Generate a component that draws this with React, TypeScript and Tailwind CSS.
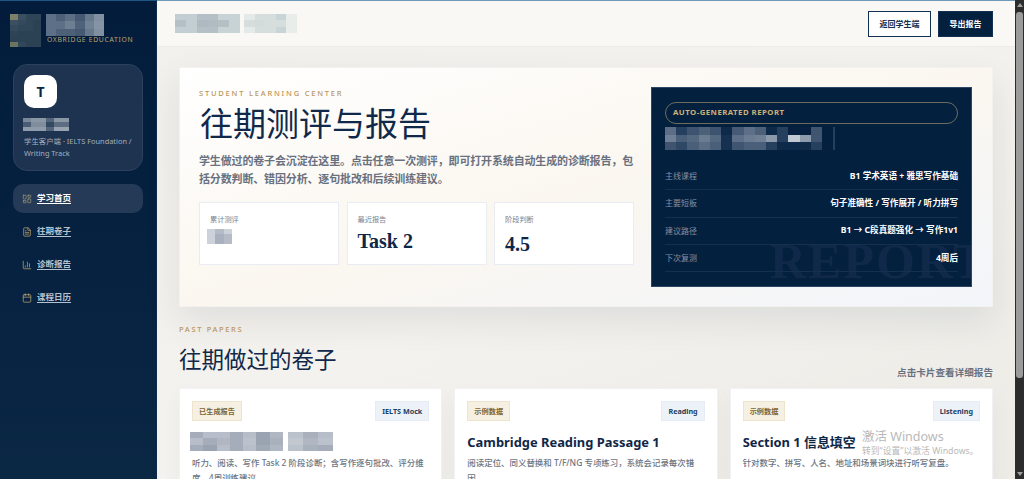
import { ChartColumn, Calendar, FileText, LayoutDashboard } from 'lucide-react'
import type { ReactNode } from 'react'

const SANS = 'font-["Noto_Sans","Noto_Sans_CJK_SC",sans-serif]'

// blurred-out regions of the reference, one hex per cell
function Mosaic({ rows, w, h }: { rows: string[][]; w: number; h: number }) {
  const cw = w / rows[0].length
  const ch = h / rows.length
  return (
    <svg width={w} height={h} shapeRendering="crispEdges" className="block shrink-0">
      {rows.map((row, y) =>
        row.map((c, x) => <rect key={`${x}-${y}`} x={x * cw} y={y * ch} width={cw + 0.5} height={ch + 0.5} fill={c} />),
      )}
    </svg>
  )
}

const LOGO = [
  ['#7d8069', '#3a5060', '#2f4658', '#2f4658'],
  ['#3c5060', '#34495a', '#2f4658', '#2b4254'],
  ['#34495a', '#2f4658', '#2f4658', '#2b4254'],
  ['#2e4456', '#2b4254', '#2b4254', '#2b4254'],
  ['#2c4254', '#2b4254', '#2b4254', '#2b4254'],
  ['#6d7361', '#31475a', '#2c4254', '#2c4254'],
]
const BRAND = [
  ['#5d7087', '#4c6078', '#5b6e83', '#455a72', '#66788c', '#8090a0'],
  ['#5d7087', '#5c6f85', '#6d7f92', '#4e637a', '#6f8194', '#8494a4'],
  ['#5d7087', '#4c6078', '#4c6078', '#455a72', '#66788c', '#8090a0'],
]
const USER = [
  ['#7a8999', '#8a97a5', '#8a97a5', '#53657c', '#8a97a5', '#8a97a5'],
  ['#4a5d75', '#7f8d9d', '#7f8d9d', '#33495f', '#5d6e82', '#5d6e82'],
  ['#8f9baa', '#8f9baa', '#8f9baa', '#53657c', '#99a4b2', '#99a4b2'],
]
const REPORT_NAME = [
  ['#5c6d85', '#24405e', '#3d5370', '#4c6078', '#3d5370', '#0e2a4a', '#465a75', '#5d6f88', '#4c6078', '#0e2a4a', '#24405e', '#08203f', '#08203f', '#3f5570'],
  ['#6f7f96', '#4a5f7a', '#54687f', '#6a7c92', '#54687f', '#16304f', '#5d6f88', '#6a7c92', '#6f8096', '#8c99aa', '#24405e', '#c0c8d2', '#8e9bac', '#3f5570'],
  ['#3e546f', '#2f4865', '#4a5f7a', '#5a6d85', '#4a5f7a', '#16304f', '#3f5570', '#4a5f7a', '#4a5f7a', '#24405e', '#0e2a4a', '#0e2a4a', '#0e2a4a', '#24405e'],
]
const HEAD_A = [
  ['#c3ced2', '#c3ced2', '#b4c0c6', '#b4c0c6', '#c8d3d6', '#c8d3d6'],
  ['#b4c0c6', '#c3ced2', '#aeb9c1', '#b0bbc2', '#b4c0c6', '#c8d3d6'],
  ['#c3ced2', '#c3ced2', '#b4c0c6', '#b4c0c6', '#c8d3d6', '#c8d3d6'],
]
const HEAD_B = [
  ['#e4eae8', '#d6dedd', '#d6dedd', '#c9d4d6', '#e8edea'],
  ['#d6dedd', '#d3dcdb', '#d6dedd', '#d6dedd', '#e8edea'],
  ['#e4eae8', '#d6dedd', '#d6dedd', '#c9d4d6', '#e8edea'],
]
const STAT = [
  ['#cdd2da', '#b5bcc8', '#cdd2da'],
  ['#cdd2da', '#a9b1bf', '#b5bcc8'],
  ['#cdd2da', '#a9b1bf', '#b5bcc8'],
]
const TITLE_A = [
  ['#a5adba', '#b8bec9', '#b8bec9', '#a5adba', '#b8bec9', '#9aa3b2', '#b0b7c3'],
  ['#b8bec9', '#a5adba', '#b0b7c3', '#a5adba', '#bcc2cc', '#9aa3b2', '#a9b1bd'],
  ['#a5adba', '#9aa3b2', '#b8bec9', '#a5adba', '#b8bec9', '#a0a9b6', '#b0b7c3'],
]
const TITLE_B = [
  ['#bcc2cc', '#a9b1bd', '#b8bec9'],
  ['#c2c7d0', '#b0b7c3', '#bcc2cc'],
  ['#bcc2cc', '#a9b1bd', '#a5adba'],
]

function NavItem({ icon, label, active }: { icon: ReactNode; label: string; active?: boolean }) {
  return (
    <a
      className={`flex h-[29px] items-center gap-[5px] rounded-[10px] pl-[9px] text-[8.5px] font-bold underline underline-offset-2 ${
        active ? 'bg-[#243a56] text-white' : 'text-[#b6c1cf]'
      }`}
    >
      <span className={active ? 'text-[#a09a7c]' : 'text-[#c4aa72]'}>{icon}</span>
      {label}
    </a>
  )
}

function Stat({ label, children }: { label: string; children: ReactNode }) {
  return (
    <div className="flex h-[63px] flex-1 flex-col border border-[#e9edf3] bg-white pl-[10px] pt-[11px]">
      <div className="text-[7.2px] leading-[10px] text-[#7a8291]">{label}</div>
      {children}
    </div>
  )
}

function ReportRow({ label, value }: { label: string; value: string }) {
  return (
    <div className="flex h-[27.3px] items-center justify-between border-b border-[#13304f]">
      <span className="text-[8px] text-[#8491a3]">{label}</span>
      <span className="text-[8.6px] font-bold text-white">{value}</span>
    </div>
  )
}

function Tag({ tone, children }: { tone: 'gold' | 'blue'; children: ReactNode }) {
  return (
    <span
      className={`flex h-[20px] items-center border px-[6px] text-[7.2px] font-bold ${
        tone === 'gold' ? 'border-[#eee3cc] bg-[#f6f0e2] text-[#7c6535]' : 'border-[#e5ecf5] bg-[#edf2f8] text-[#24405f]'
      }`}
    >
      {children}
    </span>
  )
}

function PaperCard({ tag, kind, title, desc }: { tag: string; kind: string; title: ReactNode; desc: string }) {
  return (
    <div className="h-[120px] flex-1 border border-[#f0f2f5] bg-white px-[12px] pt-[12px] shadow-[0_8px_20px_rgba(10,30,60,0.04)]">
      <div className="flex justify-between">
        <Tag tone="gold">{tag}</Tag>
        <Tag tone="blue">{kind}</Tag>
      </div>
      <div className="mt-[12px] flex h-[20px] items-center text-[12.9px] font-bold text-[#0f2747]">{title}</div>
      <p className="mt-[2px] text-[8.45px] leading-[15px] font-medium text-[#6b7482]">{desc}</p>
    </div>
  )
}

export default function App() {
  return (
    <div className={`relative flex h-[479px] w-[1024px] overflow-hidden bg-[#f3f1ec] ${SANS}`}>
      <aside className="flex w-[157px] shrink-0 flex-col border-r border-[#0d2a4a] border-t-[1px] border-t-[#1d5583] bg-gradient-to-b from-[#031c3b] to-[#0a2744] px-[13px]">
        <div className="-mx-[3px] mt-[13px] flex h-[33px] gap-[5px]">
          <Mosaic rows={LOGO} w={31} h={33} />
          <div>
            <Mosaic rows={BRAND} w={58} h={22} />
            <div className="mt-[-1px] pl-[1px] text-[6.8px] leading-[10px] tracking-[0.1em] whitespace-nowrap text-[#b3a676]">OXBRIDGE EDUCATION</div>
          </div>
        </div>
        <div className="mt-[17px] h-[107px] rounded-[14px] border border-[#2b415c] bg-[#1d3350] pl-[10px] pt-[10px]">
          <div className="flex size-[33px] items-center justify-center rounded-[10px] bg-white text-[14px] font-bold text-[#0b2545]">T</div>
          <div className="-ml-[1px] mt-[10px]">
            <Mosaic rows={USER} w={46} h={13} />
          </div>
          <div className="mt-[4px] text-[7.4px] leading-[12px] whitespace-nowrap text-[#a5b0bf]">
            学生客户端 · IELTS Foundation /
            <br />
            Writing Track
          </div>
        </div>
        <nav className="mt-[13px] flex flex-col gap-[4px]">
          <NavItem active icon={<LayoutDashboard size={10} strokeWidth={1.7} />} label="学习首页" />
          <NavItem icon={<FileText size={10} strokeWidth={1.7} />} label="往期卷子" />
          <NavItem icon={<ChartColumn size={10} strokeWidth={1.7} />} label="诊断报告" />
          <NavItem icon={<Calendar size={10} strokeWidth={1.7} />} label="课程日历" />
        </nav>
      </aside>

      <main className="flex min-w-0 flex-1 flex-col bg-gradient-to-br from-[#f2f0ec] via-[#f4f2ee] to-[#ecebe6]">
        <header className="flex h-[47px] shrink-0 items-center justify-between border-b border-[#efede7] border-t-[1px] border-t-[#6c9abb] bg-[#faf8f4] pl-[18px] pr-[22px]">
          <div className="flex gap-[4px]">
            <Mosaic rows={HEAD_A} w={65} h={19} />
            <Mosaic rows={HEAD_B} w={53} h={19} />
          </div>
          <div className="flex gap-[7px]">
            <button className="flex h-[26px] w-[63px] items-center justify-center border border-[#123052] bg-white text-[8px] font-bold text-[#123052]">
              返回学生端
            </button>
            <button className="flex h-[26px] w-[55px] items-center justify-center border border-[#123052] bg-[#04203f] text-[8px] font-bold text-white">
              导出报告
            </button>
          </div>
        </header>

        <div className="flex flex-col px-[22px] pt-[20px]">
          <section className="flex h-[240px] border border-[#f3f2ef] bg-gradient-to-br from-white via-[#fbf7f0] to-[#f2f5fa] pl-[19px] pr-[20px] pt-[19px] shadow-[0_14px_34px_rgba(10,30,60,0.09)]">
            <div className="w-[435px] shrink-0">
              <div className="text-[7.5px] leading-[12px] font-medium tracking-[0.24em] text-[#b9975a]">STUDENT LEARNING CENTER</div>
              <h1 className="mt-[5px] pl-[1px] font-['Liberation_Serif','Noto_Sans_CJK_SC',serif] text-[33px] leading-[42px] font-normal text-[#10294a]">
                往期测评与报告
              </h1>
              <p className="mt-[6px] text-[11px] leading-[18px] font-bold tracking-[-0.15px] text-[#69717f]">
                学生做过的卷子会沉淀在这里。点击任意一次测评，即可打开系统自动生成的诊断报告，包括分数判断、错因分析、逐句批改和后续训练建议。
              </p>
              <div className="mt-[14px] flex gap-[7.5px]">
                <Stat label="累计测评">
                  <div className="-ml-[3px] mt-[5px]">
                    <Mosaic rows={STAT} w={25} h={15} />
                  </div>
                </Stat>
                <Stat label="最近报告">
                  <div className="mt-[5px] font-['Liberation_Serif',serif] text-[20px] leading-[24px] font-bold text-[#0f2747]">Task 2</div>
                </Stat>
                <Stat label="阶段判断">
                  <div className="mt-[8px] font-['Liberation_Serif',serif] text-[20px] leading-[24px] font-bold text-[#0f2747]">4.5</div>
                </Stat>
              </div>
            </div>
            <div className="relative ml-[17px] h-[200px] flex-1 overflow-hidden border border-[#2c4766] bg-[#04203f] px-[13px] pt-[14px]">
              <div className="absolute bottom-[1px] left-[118px] font-['Liberation_Serif',serif] text-[50px] leading-[48px] font-bold tracking-[2px] whitespace-nowrap text-[#10294a]">
                REPORT
              </div>
              <div className="relative">
                <div className="flex h-[22px] items-center rounded-full border border-[#6b6c5e] pl-[7px] text-[7.8px] font-bold tracking-[0.06em] text-[#cdb177]">
                  AUTO-GENERATED REPORT
                </div>
                <div className="mt-[3px] flex items-stretch">
                  <Mosaic rows={REPORT_NAME} w={157} h={23} />
                  <div className="ml-[11px] w-[2px] bg-[#24405e]" />
                </div>
                <div className="mt-[13px]">
                  <ReportRow label="主线课程" value="B1 学术英语 + 雅思写作基础" />
                  <ReportRow label="主要短板" value="句子准确性 / 写作展开 / 听力拼写" />
                  <ReportRow label="建议路径" value="B1 → C段真题强化 → 写作1v1" />
                  <ReportRow label="下次复测" value="4周后" />
                </div>
              </div>
            </div>
          </section>

          <div className="mt-[17px] text-[7.5px] leading-[10px] font-medium tracking-[0.22em] text-[#b9975a]">PAST PAPERS</div>
          <div className="mt-[8px] flex h-[36px] items-end justify-between">
            <h2 className="font-['Liberation_Serif','Noto_Sans_CJK_SC',serif] text-[22.5px] leading-[34px] font-normal text-[#10294a]">往期做过的卷子</h2>
            <span className="-mb-[2px] text-[9.6px] leading-[14px] font-bold text-[#69717f]">点击卡片查看详细报告</span>
          </div>
          <div className="mt-[10px] flex gap-[12px]">
            <PaperCard
              tag="已生成报告"
              kind="IELTS Mock"
              title={
                <div className="-ml-[2px] mb-[4px] flex gap-[5px]">
                  <Mosaic rows={TITLE_A} w={93} h={19} />
                  <Mosaic rows={TITLE_B} w={45} h={19} />
                </div>
              }
              desc="听力、阅读、写作 Task 2 阶段诊断；含写作逐句批改、评分维度、4周训练建议。"
            />
            <PaperCard
              tag="示例数据"
              kind="Reading"
              title="Cambridge Reading Passage 1"
              desc="阅读定位、同义替换和 T/F/NG 专项练习，系统会记录每次错因。"
            />
            <PaperCard
              tag="示例数据"
              kind="Listening"
              title="Section 1 信息填空"
              desc="针对数字、拼写、人名、地址和场景词块进行听写复盘。"
            />
          </div>
        </div>
      </main>

      <div className="flex w-[9px] shrink-0 flex-col items-center bg-[#2c2c2c]">
        <div className="mt-[3px] h-0 w-0 border-x-[3px] border-b-[4px] border-x-transparent border-b-[#a0a0a0]" />
        <div className="mt-[5px] h-[366px] w-[7px] rounded-[3px] bg-[#9b9b9b]" />
        <div className="mt-auto mb-[3px] h-0 w-0 border-x-[3px] border-t-[4px] border-x-transparent border-t-[#a0a0a0]" />
      </div>

      <div className="absolute left-[862px] top-[429px] text-[#b9b9b9]">
        <div className="text-[12.5px] leading-[16px]">激活 Windows</div>
        <div className="text-[8.8px] leading-[12px]">转到“设置”以激活 Windows。</div>
      </div>
    </div>
  )
}
